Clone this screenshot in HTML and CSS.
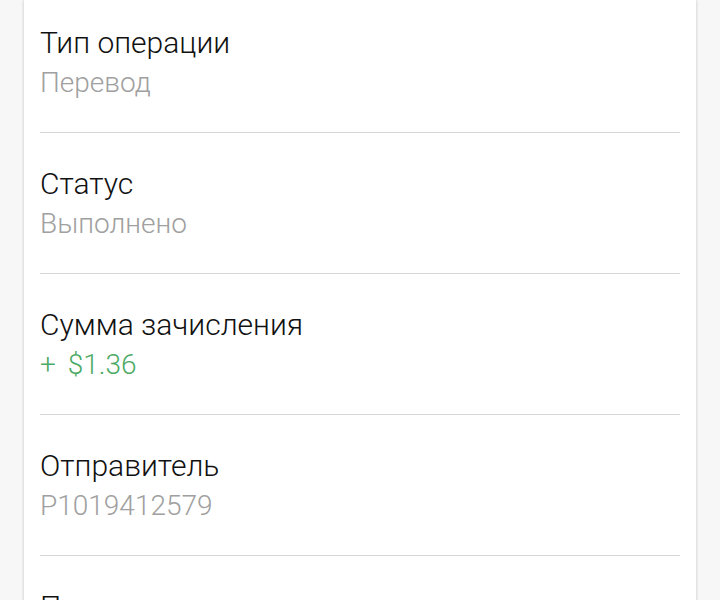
FILE: index.html
```html
<!DOCTYPE html>
<html lang="ru">
<head>
<meta charset="utf-8">
<link rel="stylesheet" href="styles.css">
</head>
<body>
<div class="card">
  <div class="row">
    <div class="label">Тип операции</div>
    <div class="value">Перевод</div>
  </div>
  <div class="row">
    <div class="label">Статус</div>
    <div class="value">Выполнено</div>
  </div>
  <div class="row">
    <div class="label">Сумма зачисления</div>
    <div class="value green">+ $1.36</div>
  </div>
  <div class="row">
    <div class="label">Отправитель</div>
    <div class="value">P1019412579</div>
  </div>
  <div class="row">
    <div class="label">Получатель</div>
    <div class="value">U0000000000</div>
  </div>
</div>
</body>
</html>
```
FILE: styles.css
```css
html, body {
  margin: 0;
  padding: 0;
  background: #f7f7f7;
  overflow: hidden;
  height: 600px;
}
body {
  font-family: Roboto, "Noto Sans", sans-serif;
}
.card {
  margin: 0 24px;
  background: #ffffff;
  box-shadow: 0 0 3px rgba(0, 0, 0, 0.22);
  padding: 0 16px;
}
.row {
  padding: 31px 0 29px;
  border-bottom: 1px solid #d6d6d6;
}
.row:first-child {
  padding-top: 23px;
}
.label {
  font-size: 30px;
  font-weight: 300;
  line-height: 40px;
  color: #111111;
}
.value {
  font-size: 28px;
  font-weight: 300;
  line-height: 40px;
  color: #a0a0a0;
}
.value.green {
  color: #4caa64;
  word-spacing: 5px;
}
```
